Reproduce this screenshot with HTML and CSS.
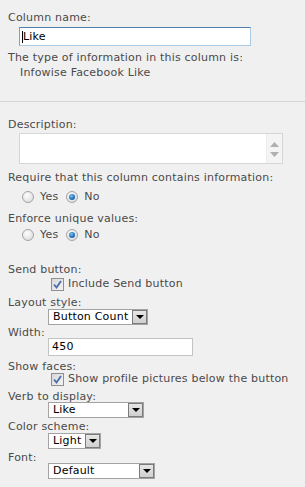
FILE: index.html
```html
<!DOCTYPE html>
<html>
<head>
<meta charset="utf-8">
<link rel="stylesheet" href="styles.css">
</head>
<body>
<div class="page">
  <div class="lbl l1">Column name:</div>
  <div class="namebox"><span class="caret"></span>Like</div>
  <div class="lbl l2">The type of information in this column is:</div>
  <div class="lbl l3 ind">Infowise Facebook Like</div>
  <div class="sep"></div>
  <div class="lbl l4">Description:</div>
  <div class="textarea">
    <div class="ta-body"></div>
    <div class="ta-scroll">
      <svg width="9" height="5" viewBox="0 0 9 5"><path d="M4.5 0 L9 5 L0 5 Z" fill="#b0b0b0"/></svg>
      <svg width="9" height="5" viewBox="0 0 9 5"><path d="M0 0 L9 0 L4.5 5 Z" fill="#b0b0b0"/></svg>
    </div>
  </div>
  <div class="lbl l5">Require that this column contains information:</div>
  <div class="radios r1">
    <span class="radio"></span><span class="rtext">Yes</span>
    <span class="radio on"></span><span class="rtext">No</span>
  </div>
  <div class="lbl l6">Enforce unique values:</div>
  <div class="radios r2">
    <span class="radio"></span><span class="rtext">Yes</span>
    <span class="radio on"></span><span class="rtext">No</span>
  </div>
  <div class="lbl l7">Send button:</div>
  <div class="check c1">
    <span class="cbox"><svg width="9" height="9" viewBox="0 0 9 9"><path d="M1 4.5 L3.5 7.5 L8 1" fill="none" stroke="#4a6cab" stroke-width="1.8"/></svg></span>
    <span class="ctext">Include Send button</span>
  </div>
  <div class="lbl l8">Layout style:</div>
  <div class="select s1"><span class="stext">Button Count</span><span class="sbtn"><i class="tri"></i></span></div>
  <div class="lbl l9">Width:</div>
  <div class="wbox">450</div>
  <div class="lbl l10">Show faces:</div>
  <div class="check c2">
    <span class="cbox"><svg width="9" height="9" viewBox="0 0 9 9"><path d="M1 4.5 L3.5 7.5 L8 1" fill="none" stroke="#4a6cab" stroke-width="1.8"/></svg></span>
    <span class="ctext">Show profile pictures below the button</span>
  </div>
  <div class="lbl l11">Verb to display:</div>
  <div class="select s2"><span class="stext">Like</span><span class="sbtn"><i class="tri"></i></span></div>
  <div class="lbl l12">Color scheme:</div>
  <div class="select s3"><span class="stext">Light</span><span class="sbtn"><i class="tri"></i></span></div>
  <div class="lbl l13">Font:</div>
  <div class="select s4"><span class="stext">Default</span><span class="sbtn"><i class="tri"></i></span></div>
</div>
</body>
</html>
```
FILE: styles.css
```css
html, body {
  margin: 0;
  padding: 0;
  background: #f0f0f0;
}
body {
  font-family: "DejaVu Sans", Verdana, sans-serif;
  font-size: 11px;
  letter-spacing: 0.2px;
  color: #4a4a4a;
  width: 305px;
  height: 487px;
  overflow: hidden;
}
.page {
  padding-top: 11px;
  display: flow-root;
}
.lbl {
  line-height: 13px;
  height: 13px;
  padding-left: 8px;
  white-space: nowrap;
}
.lbl.ind { padding-left: 20px; }
.l2 { margin-top: 5px; }
.l3 { margin-top: 2px; }
.l4 { margin-top: 16px; }
.l5 { margin-top: 7px; }
.l6 { margin-top: 8px; }
.l7 { margin-top: 21px; }
.l8 { margin-top: 5px; }
.l9 { margin-top: 1px; }
.l10 { margin-top: 4px; }
.l11 { margin-top: 4px; }
.l12 { margin-top: 2px; }
.l13 { margin-top: 2px; }

.namebox {
  margin: 3px 0 0 19px;
  width: 228px;
  height: 17px;
  background: #fff;
  border: 1px solid #a9cbe6;
  border-top-color: #4f7eab;
  border-left-color: #7aa3c9;
  color: #000;
  line-height: 17px;
  padding-left: 2px;
  box-sizing: content-box;
  display: flex;
  align-items: center;
}
.caret {
  display: inline-block;
  width: 1px;
  height: 12px;
  background: #000;
}
.sep {
  margin-top: 22px;
  height: 1px;
  background: #d5d5d5;
}
.textarea {
  margin: 2px 0 0 19px;
  width: 262px;
  height: 29px;
  border: 1px solid #d6d6d6;
  background: #fff;
  display: flex;
}
.ta-body { flex: 1; }
.ta-scroll {
  width: 16px;
  background: #f4f4f4;
  border-left: 1px solid #ececec;
  display: flex;
  flex-direction: column;
  justify-content: space-between;
  align-items: center;
  padding: 8px 0 6px;
  box-sizing: border-box;
}
.ta-scroll svg { display: block; }

.radios {
  display: flex;
  align-items: center;
  height: 14px;
  padding-left: 22px;
}
.r1 { margin-top: 6px; }
.r2 { margin-top: 3px; }
.radio {
  width: 10px;
  height: 10px;
  border-radius: 50%;
  border: 1px solid #a4a4a4;
  background: radial-gradient(circle at 40% 35%, #fdfdfd 0%, #e6e6e6 60%, #d2d2d2 100%);
  position: relative;
  flex: none;
}
.radio.on::after {
  content: "";
  position: absolute;
  left: 2px;
  top: 2px;
  width: 6px;
  height: 6px;
  border-radius: 50%;
  background: radial-gradient(circle at 40% 35%, #7ec3f0 0%, #1f74c0 55%, #0d3f7a 100%);
}
.rtext { margin-left: 6px; margin-right: 8px; line-height: 14px; }

.check {
  display: flex;
  align-items: center;
  height: 14px;
  padding-left: 51px;
}
.c1 { margin-top: 1px; }
.c2 { margin-top: -1px; }
.cbox {
  width: 11px;
  height: 11px;
  border: 1px solid #8e8f8f;
  background: linear-gradient(135deg, #d8d8d8, #f4f4f4);
  display: flex;
  align-items: center;
  justify-content: center;
  flex: none;
}
.cbox svg { display: block; }
.ctext { margin-left: 4px; line-height: 14px; }

.select {
  margin-left: 48px;
  height: 14px;
  border: 1px solid #a3a3a3;
  background: #fff;
  display: flex;
  align-items: stretch;
  color: #000;
}
.s1 { width: 98px; margin-top: 0; }
.s2 { width: 94px; margin-top: -1px; }
.s3 { width: 51px; margin-top: 0; }
.s4 { width: 105px; margin-top: -1px; }
.stext {
  flex: 1;
  padding-left: 4px;
  line-height: 14px;
  white-space: nowrap;
  overflow: hidden;
}
.sbtn {
  width: 15px;
  border: 1px solid #7b7b7b;
  background: linear-gradient(#e6e6e6, #d0d0d0);
  display: flex;
  align-items: center;
  justify-content: center;
  box-sizing: border-box;
}
.tri {
  width: 0;
  height: 0;
  border-left: 4px solid transparent;
  border-right: 4px solid transparent;
  border-top: 4px solid #000;
}
.wbox {
  margin: -1px 0 0 48px;
  width: 140px;
  height: 16px;
  border: 1px solid #c3c3c3;
  background: #fff;
  color: #000;
  line-height: 16px;
  padding-left: 3px;
  box-sizing: content-box;
}
```
